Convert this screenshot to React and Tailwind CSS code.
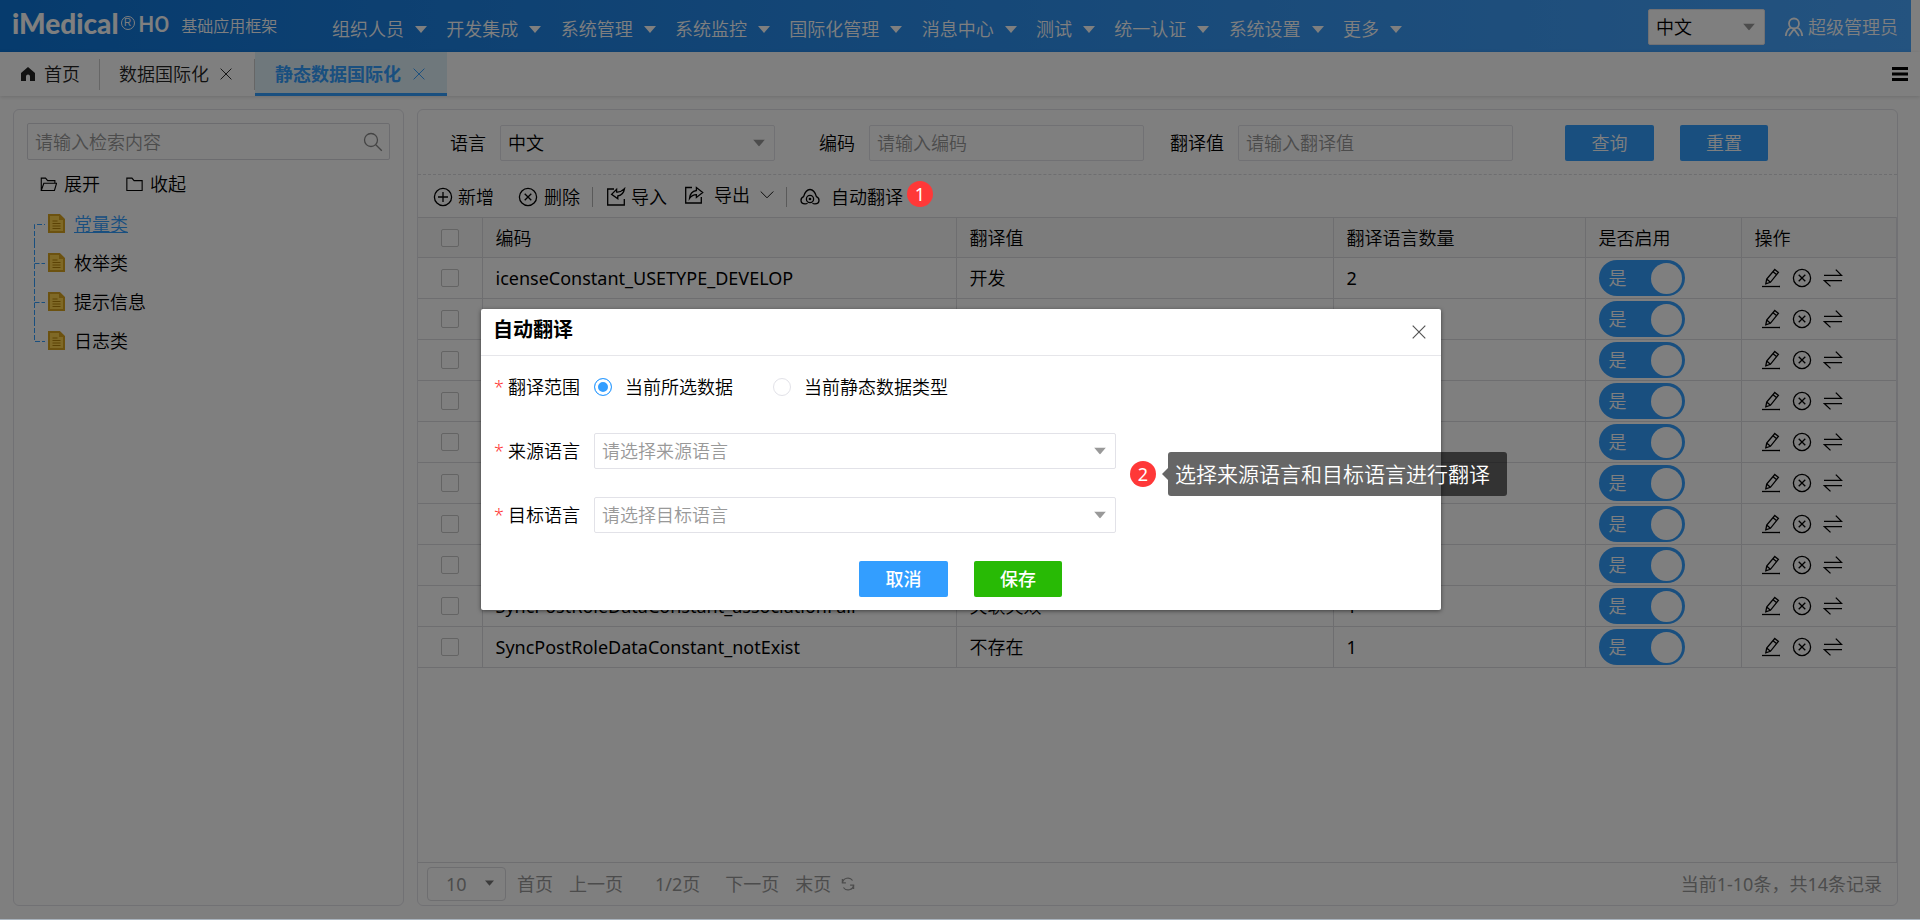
import React, { useState } from 'react';

const MENUS = [
  '组织人员',
  '开发集成',
  '系统管理',
  '系统监控',
  '国际化管理',
  '消息中心',
  '测试',
  '统一认证',
  '系统设置',
  '更多',
];

const TREE = ['常量类', '枚举类', '提示信息', '日志类'];

const ROWS = [
  { id: 1, code: 'icenseConstant_USETYPE_DEVELOP', value: '开发', count: 2 },
  { id: 2 },
  { id: 3 },
  { id: 4 },
  { id: 5 },
  { id: 6 },
  { id: 7 },
  { id: 8 },
  { id: 9, code: 'SyncPostRoleDataConstant_associationFail', value: '关联失效', count: 1 },
  { id: 10, code: 'SyncPostRoleDataConstant_notExist', value: '不存在', count: 1 },
];

// Shared wrapper for the line icons
const Icon = ({ size = 'size-5', width = 1.3, children }) => (
  <svg
    className={`${size} shrink-0`}
    viewBox="0 0 20 20"
    fill="none"
    stroke="currentColor"
    strokeWidth={width}
    aria-hidden="true"
  >
    {children}
  </svg>
);

const Caret = ({ className = '', size = 'h-[7px] w-3' }) => (
  <svg className={`${size} shrink-0 ${className}`} viewBox="0 0 12 7" fill="currentColor" aria-hidden="true">
    <path d="M0 0h12L6 7z" />
  </svg>
);

const PlusCircle = () => (
  <Icon>
    <circle cx="10" cy="10" r="8.6" />
    <path d="M10 5v10M5 10h10" />
  </Icon>
);

const CloseCircle = () => (
  <Icon>
    <circle cx="10" cy="10" r="8.6" />
    <path d="M6.7 6.7l6.6 6.6M13.3 6.7l-6.6 6.6" />
  </Icon>
);

const ImportIcon = () => (
  <Icon>
    <path d="M8 2H1.7v16h16.6v-6" />
    <path d="M18.5 1.6c-.6 4-2.7 6.600-6.700 7.400v2.800L5.600 7.300l5-5v2.700c2.600.3 5.300-.8 7.900-3.400z" />
  </Icon>
);

const ExportIcon = () => (
  <Icon>
    <path d="M8 2.5H1.7V18h15.600v-6" />
    <path d="M5.500 13.500c.4-4.500 2.600-7.300 6.900-8V2.600l6.300 5-6.300 4.900V9.700c-2.900 0-5.100 1.200-6.900 3.800z" />
  </Icon>
);

const CloudIcon = () => (
  <Icon>
    <path d="M7.500 16.200c-.7.500-1.400.7-2.400.7C2.700 16.900 1 15.300 1 13.200c0-1.600.9-2.900 2.600-3.600C4.700 5.800 6.800 2.500 10 2.500s5.300 3.300 6.400 7.100c1.700.7 2.600 2 2.600 3.600 0 2.100-1.700 3.700-4.100 3.700-1 0-1.700-.2-2.400-.7" />
    <circle cx="10" cy="12" r="3.600" />
    <circle cx="10" cy="12" r=".7" />
  </Icon>
);

const EditIcon = () => (
  <Icon>
    <path d="M1 18.500h18" />
    <path d="M13.800 1.500l3.600 2.900-8 9.900-4.600 1.500.9-4.700zM12 3.800l3.500 2.800M5.700 11.100l3.700 3.200" />
  </Icon>
);

const SwapIcon = () => (
  <Icon>
    <path d="M1 7.300h17.500L12.800 1.600M19 12.700H1.500l6 5.700" />
  </Icon>
);

const DocIcon = () => (
  <svg className="h-[19px] w-[17px] shrink-0" viewBox="0 0 17 19" fill="none" aria-hidden="true">
    <path d="M1 1h10.500L16 5.500V18H1z" fill="#ffd24d" stroke="#d9a520" strokeWidth="2" />
    <path d="M11 1v5h5" fill="#d9a520" />
    <path d="M4.500 7h5M4.500 9.500h8M4.500 12h8M4.500 14.500h8" stroke="#b8860b" />
  </svg>
);

const Badge = ({ children, className = '' }) => (
  <span
    className={`flex size-[26px] items-center justify-center rounded-full bg-[#ff3838] text-lg leading-none font-normal text-white ${className}`}
  >
    {children}
  </span>
);

const SelectBox = ({ id, label, children, className = '', textClass = 'text-black' }) => (
  <div className={`relative ${className}`}>
    <select
      id={id}
      aria-label={label}
      className={`size-full appearance-none rounded-[2px] border border-[#e2e2e8] bg-white pl-[7px] leading-6 outline-none ${textClass}`}
    >
      {children}
    </select>
    <Caret className="pointer-events-none absolute top-1/2 right-[10px] -translate-y-1/2 text-[#999]" />
  </div>
);

const Header = () => (
  <header className="mr-[9px] flex h-[52px] items-center bg-linear-to-r from-[#0c76da] via-[#2b90f0] to-[#48a6ff] text-white">
    <div className="flex w-[320px] shrink-0 items-center pb-1.5 pl-3">
      <span className="font-['Lato'] text-[28px] leading-7 font-black">iMedical</span>
      <span className="ml-0.5 flex size-[14px] items-center justify-center rounded-full border border-white font-['Liberation_Sans'] text-[10px] leading-none">
        R
      </span>
      <span className="ml-1 pt-1 font-['Roboto'] text-[22px] leading-7 font-medium">HO</span>
      <span className="ml-3 pt-1.5 text-base leading-6">基础应用框架</span>
    </div>
    <nav className="ml-3 flex w-[1070px] shrink-0 items-center justify-between pt-1.5">
      {MENUS.map((name) => (
        <button key={name} type="button" className="flex items-center gap-[11px] leading-6">
          {name}
          <Caret />
        </button>
      ))}
    </nav>
    <div className="ml-auto flex items-center gap-[19px] pt-0.5 pr-[13px]">
      <SelectBox label="界面语言" className="h-9 w-[117px]">
        <option>中文</option>
      </SelectBox>
      <a href="#user" className="flex items-center gap-1 leading-6">
        <Icon width={1.8}>
          <circle cx="10" cy="6.5" r="5" />
          <path d="M7 10.500c-3 1.500-5 4.500-5.200 8.500M13 10.500c3 1.500 5 4.500 5.200 8.500M5 19l5-7 5 7" />
        </Icon>
        超级管理员
      </a>
    </div>
  </header>
);

const TabClose = () => (
  <Icon size="size-3" width={1.6}>
    <path d="M1 1l18 18M19 1L1 19" />
  </Icon>
);

const TabBar = () => (
  <div className="flex h-11 items-center bg-white text-[#222] shadow-[0_1px_4px_rgba(0,0,0,0.15)]">
    <button type="button" className="flex h-[31px] items-center gap-2 border-r border-[#ccc] pr-[19px] pl-5">
      <svg className="size-4" viewBox="0 0 16 16" fill="#222" aria-hidden="true">
        <path d="M8 1l7 6v8h-5v-4.500a2 2 0 0 0-4 0V15H1V7z" />
      </svg>
      首页
    </button>
    <button type="button" className="flex h-[31px] items-center gap-[11px] border-r border-[#ccc] pr-[22px] pl-[19px]">
      数据国际化
      <TabClose />
    </button>
    <button
      type="button"
      className="flex h-11 items-center gap-3 border-b-[3px] border-[#339eff] bg-[#dff0f8] pt-[3px] pr-[22px] pl-5 font-bold text-[#339eff]"
    >
      静态数据国际化
      <TabClose />
    </button>
    <button type="button" aria-label="菜单" className="mr-3 ml-auto text-black">
      <svg className="h-[14px] w-4" viewBox="0 0 16 14" stroke="currentColor" strokeWidth="3" aria-hidden="true">
        <path d="M0 1.500h16M0 7h16M0 12.500h16" />
      </svg>
    </button>
  </div>
);

const Sidebar = () => (
  <aside className="w-[391px] shrink-0 rounded-md border border-[#e2e2e8] bg-white p-[13px]">
    <div className="flex h-[37px] items-center rounded-[2px] border border-[#d9d9de] pr-[6px] pl-[7px]">
      <input
        aria-label="检索"
        placeholder="请输入检索内容"
        className="min-w-0 flex-1 leading-6 outline-none placeholder:text-[#999]"
      />
      <span className="text-[#888]">
        <Icon>
          <circle cx="8" cy="8" r="6.5" />
          <path d="M12.800 12.800l6 6" />
        </Icon>
      </span>
    </div>
    <div className="mt-3 flex items-center gap-[26px] pl-[13px] leading-6">
      <button type="button" className="flex items-center gap-[7px]">
        <Icon size="size-[17px]">
          <path d="M1.500 17V2.500h5l2.500 3h8.500v3M1.500 17l3-8.500h15L17 17z" />
        </Icon>
        展开
      </button>
      <button type="button" className="flex items-center gap-[7px]">
        <Icon size="size-[17px]">
          <path d="M1 17V2.500h6l2.500 3H19V17z" />
        </Icon>
        收起
      </button>
    </div>
    <ul className="mt-2 pl-[7px]">
      {TREE.map((name, i) => (
        <li key={name} className="flex h-[39px] items-center">
          <svg className="h-full w-[11px]" viewBox="0 0 11 39" fill="none" stroke="#339eff" strokeDasharray="5 2" aria-hidden="true">
            <path
              d={i === 0 ? 'M.5 39V20.500H11' : i === TREE.length - 1 ? 'M.5 0v20.500H11' : 'M.5 0v39M.5 20.500H11'}
            />
          </svg>
          <a
            href={`#tree-${i}`}
            className={`ml-[3px] flex items-center gap-[9px] ${i === 0 ? 'text-[#339eff] underline' : ''}`}
          >
            <DocIcon />
            {name}
          </a>
        </li>
      ))}
    </ul>
  </aside>
);

const FilterBar = () => (
  <form className="flex h-[65px] items-center border-b border-dashed border-[#dcdce0] pt-px pl-8" onSubmit={(e) => e.preventDefault()}>
    <label htmlFor="language" className="mr-[14px]">语言</label>
    <SelectBox id="language" className="h-9 w-[275px]">
      <option>中文</option>
    </SelectBox>
    <label htmlFor="code" className="mr-[14px] ml-[44px]">编码</label>
    <input
      id="code"
      placeholder="请输入编码"
      className="h-9 w-[275px] rounded-[2px] border border-[#e2e2e8] px-[7px] outline-none placeholder:text-[#999]"
    />
    <label htmlFor="value" className="mr-[14px] ml-[26px]">翻译值</label>
    <input
      id="value"
      placeholder="请输入翻译值"
      className="h-9 w-[275px] rounded-[2px] border border-[#e2e2e8] px-[7px] outline-none placeholder:text-[#999]"
    />
    <button type="submit" className="ml-[52px] h-9 w-[89px] rounded-[2px] bg-[#339eff] text-white">查询</button>
    <button type="reset" className="ml-[26px] h-9 w-[88px] rounded-[2px] bg-[#339eff] text-white">重置</button>
  </form>
);

const Toolbar = () => (
  <div className="flex h-[42px] items-center pt-0.5 pl-[15px]">
    <button type="button" className="flex items-center gap-[5px]">
      <PlusCircle />
      新增
    </button>
    <button type="button" className="ml-6 flex items-center gap-[6px]">
      <CloseCircle />
      删除
    </button>
    <span className="ml-3 h-5 w-px bg-[#b5b5b5]" />
    <button type="button" className="ml-[13px] flex items-center gap-[5px]">
      <ImportIcon />
      导入
    </button>
    <button type="button" className="ml-[17px] flex items-center gap-[10px] pb-1">
      <ExportIcon />
      导出
      <Icon size="size-[14px]">
        <path d="M1 5l9 9 9-9" />
      </Icon>
    </button>
    <span className="ml-3 h-5 w-px bg-[#b5b5b5]" />
    <button type="button" className="ml-[13px] flex items-center gap-[11px]">
      <CloudIcon />
      自动翻译
    </button>
  </div>
);

const CheckBox = ({ label }) => (
  <input
    type="checkbox"
    aria-label={label}
    className="block size-[18px] appearance-none rounded-[2px] border border-[#c8c8c8] bg-white"
  />
);

const DataTable = () => (
  <div className="flex-1 border-r border-[#e2e2e8]">
    <table className="w-full table-fixed border-collapse text-left">
      <colgroup>
        <col className="w-16" />
        <col className="w-[474px]" />
        <col className="w-[377px]" />
        <col className="w-[252px]" />
        <col className="w-[156px]" />
        <col />
      </colgroup>
      <thead>
        <tr className="h-10 border-y border-[#dcdce0] bg-[#f9f9f9] [&>th]:border-r [&>th]:border-[#dcdce0] [&>th]:px-[13px] [&>th]:font-[350] [&>th:last-child]:border-r-0">
          <th>
            <div className="pl-[10px]">
              <CheckBox label="全选" />
            </div>
          </th>
          <th>编码</th>
          <th>翻译值</th>
          <th>翻译语言数量</th>
          <th>是否启用</th>
          <th>操作</th>
        </tr>
      </thead>
      <tbody>
        {ROWS.map((row) => (
          <tr
            key={row.id}
            className="h-[41px] border-b border-[#dcdce0] [&>td]:border-r [&>td]:border-[#dcdce0] [&>td]:px-[13px] [&>td:last-child]:border-r-0"
          >
            <td>
              <div className="pl-[10px]">
                <CheckBox label={`选择第${row.id}行`} />
              </div>
            </td>
            <td className="truncate font-normal">{row.code}</td>
            <td>{row.value}</td>
            <td className="font-normal">{row.count}</td>
            <td>
              <button
                type="button"
                role="switch"
                aria-checked="true"
                className="flex h-9 w-[86px] items-center justify-between rounded-full bg-[#339eff] pr-[3px] pl-[10px] text-white"
              >
                是
                <span className="size-[31px] rounded-full bg-white" />
              </button>
            </td>
            <td>
              <div className="flex items-center gap-[11px] pl-[6px]">
                <button type="button" aria-label="编辑"><EditIcon /></button>
                <button type="button" aria-label="删除"><CloseCircle /></button>
                <button type="button" aria-label="切换"><SwapIcon /></button>
              </div>
            </td>
          </tr>
        ))}
      </tbody>
    </table>
  </div>
);

const Pager = () => (
  <div className="flex h-[43px] items-center border-t border-[#dcdce0] pr-[15px] pl-[9px] font-normal text-[#999]">
    <div className="relative h-[34px] w-[79px]">
      <select
        aria-label="每页条数"
        className="size-full appearance-none rounded-[4px] border border-[#dcdce0] bg-white pl-[18px] outline-none"
      >
        <option>10</option>
      </select>
      <Caret size="h-[6px] w-[9px]" className="pointer-events-none absolute top-[13px] right-3 text-[#777]" />
    </div>
    <button type="button" className="ml-[11px]">首页</button>
    <button type="button" className="ml-4">上一页</button>
    <span className="ml-8">1/2页</span>
    <button type="button" className="ml-[25px]">下一页</button>
    <button type="button" className="ml-4">末页</button>
    <button type="button" aria-label="刷新" className="ml-[10px]">
      <Icon size="size-[14px]" width={1.8}>
        <path d="M2 8.500A8 8 0 0 1 16.500 5M18 11.500A8 8 0 0 1 3.500 15" />
        <path d="M2 3v5.500h5M18 17v-5.500h-5" />
      </Icon>
    </button>
    <span className="ml-auto">当前1-10条，共14条记录</span>
  </div>
);

const Required = () => <span className="text-[#ff3838]">*</span>;

const FieldLabel = ({ htmlFor, children }) => (
  <label htmlFor={htmlFor} className="flex w-[100px] shrink-0 items-center gap-1">
    <Required />
    {children}
  </label>
);

const Radio = ({ label, checked, onChange }) => (
  <label className="flex items-center gap-[13px]">
    <input
      type="radio"
      name="scope"
      checked={checked}
      onChange={onChange}
      className="size-[18px] appearance-none rounded-full border border-[#e2e2e8] bg-white checked:border-[#339eff] checked:bg-[#339eff] checked:shadow-[inset_0_0_0_3px_#fff]"
    />
    {label}
  </label>
);

const TranslateDialog = () => {
  const [scope, setScope] = useState('selected');

  return (
    <div
      className="relative z-20 w-[960px] rounded-[2px] bg-white pb-[13px] shadow-[0_1px_4px_rgba(0,0,0,0.5)]"
      role="dialog"
      aria-label="自动翻译"
    >
      <div className="flex h-[47px] items-center justify-between border-b border-[#e6e6ea] pr-[15px] pl-3">
        <h2 className="pb-1 text-xl leading-7 font-bold">自动翻译</h2>
        <button type="button" aria-label="关闭" className="text-[#555]">
          <Icon size="size-[14px]" width={1.7}>
            <path d="M1 1l18 18M19 1L1 19" />
          </Icon>
        </button>
      </div>
      <div className="flex flex-col gap-7 pt-[13px] pl-[13px]">
        <div className="flex h-9 items-center" role="radiogroup" aria-label="翻译范围">
          <span className="flex w-[100px] shrink-0 items-center gap-1">
            <Required />
            翻译范围
          </span>
          <div className="flex items-center gap-10">
            <Radio label="当前所选数据" checked={scope === 'selected'} onChange={() => setScope('selected')} />
            <Radio label="当前静态数据类型" checked={scope === 'type'} onChange={() => setScope('type')} />
          </div>
        </div>
        <div className="flex h-9 items-center">
          <FieldLabel htmlFor="source">来源语言</FieldLabel>
          <SelectBox id="source" className="h-9 w-[522px]" textClass="text-[#999]">
            <option>请选择来源语言</option>
          </SelectBox>
        </div>
        <div className="flex h-9 items-center">
          <FieldLabel htmlFor="target">目标语言</FieldLabel>
          <SelectBox id="target" className="h-9 w-[522px]" textClass="text-[#999]">
            <option>请选择目标语言</option>
          </SelectBox>
        </div>
      </div>
      <div className="mt-7 flex gap-[26px] pl-[378px]">
        <button type="button" className="h-9 w-[89px] rounded-[2px] bg-[#339eff] font-medium text-white">取消</button>
        <button type="button" className="h-9 w-[88px] rounded-[2px] bg-[#28ba05] font-medium text-white">保存</button>
      </div>

      {/* Guide step 2 */}
      <div className="absolute top-[143px] left-[649px] flex items-center">
        <Badge>2</Badge>
        <svg className="ml-[6px] h-3 w-[6px]" viewBox="0 0 6 12" aria-hidden="true">
          <path d="M6 0v12L0 6z" fill="rgba(0,0,0,0.6)" />
        </svg>
        <span className="flex h-11 w-[339px] items-center rounded-[3px] bg-black/60 pl-[7px] text-[21px] leading-7 whitespace-nowrap text-white">
          选择来源语言和目标语言进行翻译
        </span>
      </div>
    </div>
  );
};

const App = () => (
  <div className="relative flex min-h-screen flex-col bg-[#aab4be] pb-px font-['Noto_Sans','Noto_Sans_CJK_SC',sans-serif] text-lg leading-6 font-[350] text-black">
    <div className="flex flex-1 flex-col bg-white">
      <Header />
      <TabBar />
      <main className="flex flex-1 gap-[13px] p-[13px]">
        <Sidebar />
        <section className="mr-[9px] flex min-w-0 flex-1 flex-col rounded-md border border-[#e2e2e8]">
          <FilterBar />
          <Toolbar />
          <DataTable />
          <Pager />
        </section>
      </main>
    </div>

    <div className="absolute inset-x-0 top-0 bottom-px flex items-center justify-center bg-black/50 pl-0.5">
      <TranslateDialog />
    </div>

    {/* Guide step 1 */}
    <Badge className="absolute top-[181px] left-[907px]">1</Badge>
  </div>
);

export default App;
